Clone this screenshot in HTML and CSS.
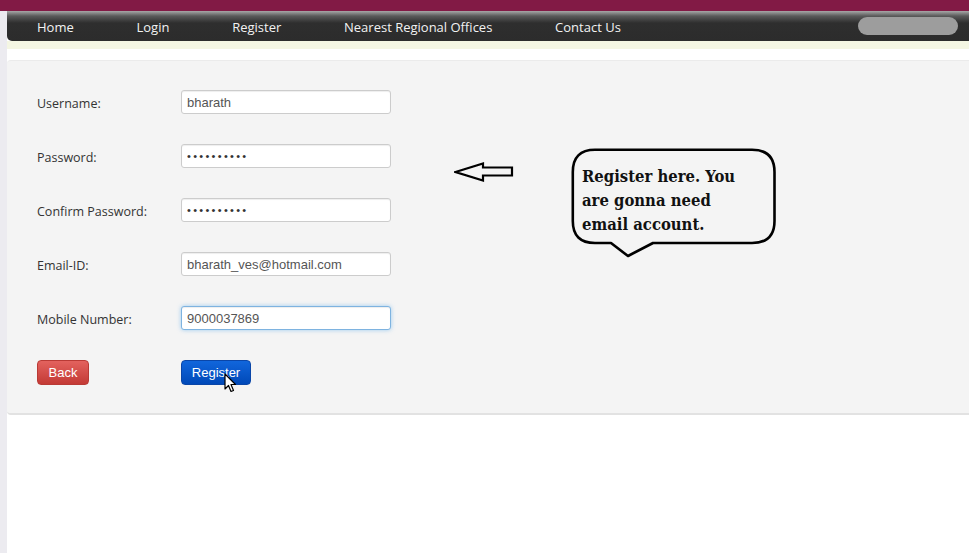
FILE: index.html
```html
<!DOCTYPE html>
<html>
<head>
<meta charset="utf-8">
<title>Register</title>
<link rel="stylesheet" href="styles.css">
</head>
<body>
<div class="topband"></div>
<div class="page">
  <nav class="navbar">
    <ul class="menu">
      <li>Home</li>
      <li>Login</li>
      <li>Register</li>
      <li>Nearest Regional Offices</li>
      <li>Contact Us</li>
    </ul>
    <div class="search"></div>
  </nav>
  <div class="subbar"></div>
  <section class="panel">
    <form class="form">
      <label class="label">Username:</label>
      <input class="field" type="text" value="bharath">
      <label class="label">Password:</label>
      <input class="field" type="password" value="bharath123">
      <label class="label">Confirm Password:</label>
      <input class="field" type="password" value="bharath123">
      <label class="label">Email-ID:</label>
      <input class="field" type="text" value="bharath_ves@hotmail.com">
      <label class="label">Mobile Number:</label>
      <input class="field focused" type="text" value="9000037869">
      <div class="cell"><button type="button" class="btn btn-back">Back</button></div>
      <div class="cell cursor-host">
        <button type="button" class="btn btn-register">Register</button>
        <svg class="cursor" width="13" height="20" viewBox="0 0 13 20"><path d="M1 1 L1 16 L4.5 12.5 L7 18.5 L9.5 17.5 L7 11.5 L11.5 11.5 Z" fill="#fff" stroke="#000" stroke-width="1.2" stroke-linejoin="round"/></svg>
      </div>
    </form>
    <div class="note">
      <svg class="arrow" width="60" height="20" viewBox="0 0 60 20"><path d="M1.5 10 L29 1.5 L29 5.5 L58 5.5 L58 13.5 L29 13.5 L29 18.5 Z" fill="none" stroke="#000" stroke-width="2.2" stroke-linejoin="miter"/></svg>
      <div class="bubble">
        <svg class="bubble-shape" width="206" height="112" viewBox="0 0 206 112"><path d="M24 1.8 H181 Q203.5 1.8 203.5 24 V73 Q203.5 95 181 95 H82 L57 108 L40 95 H24 Q1.8 95 1.8 73 V24 Q1.8 1.8 24 1.8 Z" fill="none" stroke="#000" stroke-width="2.6" stroke-linejoin="round"/></svg>
        <p class="bubble-text">Register here. You<br>are gonna need<br>email account.</p>
      </div>
    </div>
  </section>
</div>
</body>
</html>
```
FILE: styles.css
```css
html, body {
  margin: 0;
  padding: 0;
}
body {
  background: #ecebf0;
  width: 969px;
  height: 553px;
  overflow: hidden;
  font-family: "Open Sans", "DejaVu Sans", sans-serif;
}
.topband {
  height: 11px;
  background: #821a45;
}
.page {
  margin-left: 7px;
  background: #ffffff;
  height: 542px;
}
.navbar {
  height: 30px;
  display: flex;
  align-items: center;
  background: linear-gradient(#a8a8a8 0px, #5a5a5a 5px, #2e2e2e 12px, #2c2c2c 100%);
  border-radius: 0 0 0 5px;
}
.menu {
  list-style: none;
  margin: 0;
  padding: 2px 0 0 30px;
  display: flex;
  gap: 62.75px;
}
.menu li {
  color: #f2f2f2;
  font-size: 13px;
  line-height: 28px;
}
.search {
  margin-left: auto;
  margin-right: 11px;
  width: 100px;
  height: 18px;
  border-radius: 9px;
  background: #9d9d9d;
}
.subbar {
  height: 8px;
  background: #f4f6e3;
  margin-bottom: 11px;
}
.panel {
  background: #f4f4f4;
  border-top: 1px solid #ebebeb;
  border-bottom: 2px solid #e2e2e2;
  border-radius: 4px 0 0 4px;
  padding: 29px 0 27px 30px;
  display: flex;
  align-items: flex-start;
  height: 296px;
}
.form {
  display: grid;
  grid-template-columns: 144px 210px;
  grid-auto-rows: 24px;
  row-gap: 30px;
  align-items: center;
  margin: 0;
}
.label {
  font-size: 12.5px;
  color: #333;
  padding-top: 3px;
}
.field {
  box-sizing: border-box;
  width: 210px;
  height: 24px;
  margin: 0;
  border: 1px solid #cccccc;
  border-radius: 3px;
  background: #fff;
  box-shadow: inset 0 1px 1px rgba(0,0,0,0.07);
  padding: 0 5px;
  font-family: "Liberation Sans", Arial, sans-serif;
  font-size: 13px;
  color: #555;
  outline: none;
}
.field[type="password"] {
  font-size: 11px;
  letter-spacing: 2.3px;
  color: #333;
}
.field.focused {
  border-color: #7eb3e0;
  box-shadow: inset 0 1px 1px rgba(0,0,0,0.07), 0 0 4px rgba(82,168,236,0.55);
}
.cell {
  height: 25px;
  align-self: start;
}
.cursor-host {
  position: relative;
}
.cursor {
  position: absolute;
  left: 43px;
  top: 13px;
}
.btn {
  height: 25px;
  border-radius: 4px;
  font-family: "Liberation Sans", Arial, sans-serif;
  font-size: 13px;
  color: #fff;
  padding: 0;
  margin: 0;
  cursor: pointer;
}
.btn-back {
  width: 52px;
  border: 1px solid #b93a35;
  background: linear-gradient(#e3625e, #c33a35);
}
.btn-register {
  width: 70px;
  border: 1px solid #0a46a8;
  background: linear-gradient(#1166dc, #0049b8);
}
.note {
  display: flex;
  align-items: flex-start;
  margin-left: 63px;
}
.arrow {
  display: block;
  margin-top: 72px;
}
.bubble {
  position: relative;
  margin-left: 57px;
  margin-top: 58px;
  width: 206px;
  height: 112px;
}
.bubble-shape {
  position: absolute;
  left: 0;
  top: 0;
}
.bubble-text {
  position: relative;
  margin: 0;
  padding: 17px 0 0 11px;
  font-family: "DejaVu Serif", serif;
  font-stretch: condensed;
  font-weight: bold;
  font-size: 16.5px;
  line-height: 24px;
  color: #111;
}
```
